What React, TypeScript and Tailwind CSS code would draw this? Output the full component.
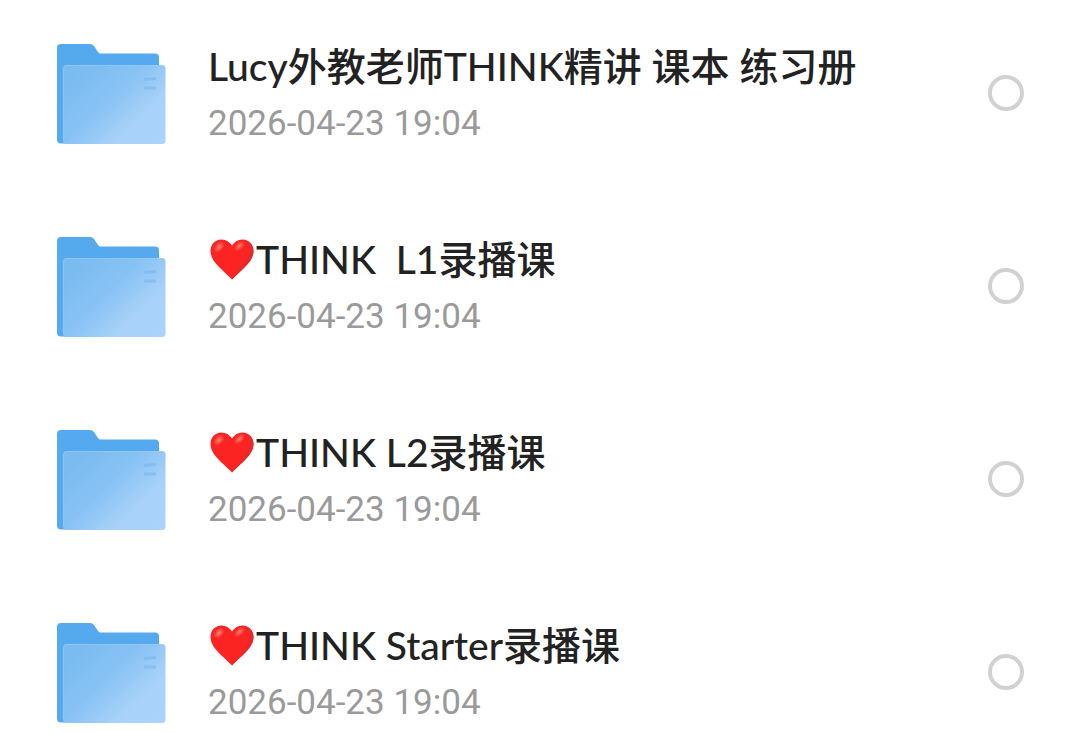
import React, { useState } from 'react';

const folders = [
  { id: 'lucy', heart: false, name: 'Lucy外教老师THINK精讲 课本 练习册', date: '2026-04-23 19:04' },
  { id: 'l1', heart: true, name: 'THINK  L1录播课', date: '2026-04-23 19:04' },
  { id: 'l2', heart: true, name: 'THINK L2录播课', date: '2026-04-23 19:04' },
  { id: 'starter', heart: true, name: 'THINK Starter录播课', date: '2026-04-23 19:04' },
];

const FolderIcon = ({ id }: { id: string }) => (
  <svg className="w-[110px] h-[102px] shrink-0" viewBox="0 -1 110 102" fill="none" aria-hidden="true">
    <defs>
      <linearGradient id={`front-${id}`} x1="18" y1="30" x2="92" y2="106" gradientUnits="userSpaceOnUse">
        <stop offset="0" stopColor="#7abbf0" />
        <stop offset="0.4" stopColor="#88c2f4" />
        <stop offset="0.75" stopColor="#a8d2f9" />
        <stop offset="1" stopColor="#a9d3fb" />
      </linearGradient>
    </defs>
    <path d="M5 1h29q2.500 0 4 2l4 6q1 1.500 3 1.500h54q4 0 4 4v86H5q-4 0-4-4V5q0-4 4-4z" fill="#55a9ee" />
    <rect x="7" y="22" width="102.500" height="79" rx="3.500" fill={`url(#front-${id})`} />
    <path d="M7.500 97V26q0-3.500 3.500-3.500h94q4 0 4 3.500" stroke="#9bcdf7" strokeOpacity="0.6" />
    <path d="M88 36.500l12-1M88 45h12" stroke="#79b5ef" strokeWidth="3" strokeOpacity="0.6" />
  </svg>
);

const HeartIcon = ({ id }: { id: string }) => (
  <svg className="w-12 h-12 shrink-0" viewBox="0 0 48 48" role="img" aria-label="❤️">
    <defs>
      <radialGradient id={`shine-${id}`}>
        <stop offset="0" stopColor="#ff8d7d" />
        <stop offset="1" stopColor="#fb4a40" stopOpacity="0.35" />
      </radialGradient>
    </defs>
    <path
      d="M24 10.500C21.500 6.500 17.800 4.500 13.500 4.500 7 4.500 2.500 9.500 2.500 16c0 11 13 19.500 21.500 28.500C32.500 35.500 45.500 27 45.500 16 45.500 9.500 41 4.500 34.500 4.500c-4.300 0-8 2-10.500 6z"
      fill="#fb2422"
    />
    <path d="M41 7.500c4 8-1 18-17 35.500v1.500C32.500 35.500 45.500 27 45.500 16c0-3.500-1.500-6.500-4.500-8.500z" fill="#e32a2b" />
    <ellipse cx="11" cy="12" rx="6" ry="4" transform="rotate(-46 11 12)" fill={`url(#shine-${id})`} />
    <ellipse cx="31.500" cy="11" rx="6" ry="3.500" transform="rotate(-42 31.500 11)" fill={`url(#shine-${id})`} />
  </svg>
);

const FolderRow = ({ id, heart, name, date, checked, onToggle }: any) => (
  <li>
    <label htmlFor={`check-${id}`} className="flex items-center cursor-pointer">
      <FolderIcon id={id} />
      <div className="ml-[42px] flex-1 min-w-0">
        <div className="flex items-center font-[Lato,'Noto_Sans_CJK_SC',sans-serif] text-[39px] leading-[54px] font-medium text-[#222222]">
          {heart && <HeartIcon id={id} />}
          <span className="whitespace-pre truncate">{name}</span>
        </div>
        <div className="mt-2 font-[Roboto,sans-serif] text-[35px] leading-[46px] text-[#9a9a9a]">{date}</div>
      </div>
      <input
        id={`check-${id}`}
        type="checkbox"
        checked={checked}
        onChange={onToggle}
        className="appearance-none w-9 h-9 shrink-0 rounded-full border-4 border-[#cfd1d3] bg-white checked:bg-[#55a9ee] checked:border-[#55a9ee]"
      />
    </label>
  </li>
);

export default function App() {
  const [selected, setSelected] = useState<string[]>([]);

  const toggle = (id: string) => {
    setSelected(selected.includes(id) ? selected.filter((s) => s !== id) : [...selected, id]);
  };

  return (
    <main className="bg-white px-14 pt-[39px]">
      <ul className="flex flex-col gap-[85px]">
        {folders.map((f) => (
          <FolderRow key={f.id} {...f} checked={selected.includes(f.id)} onToggle={() => toggle(f.id)} />
        ))}
      </ul>
    </main>
  );
}
